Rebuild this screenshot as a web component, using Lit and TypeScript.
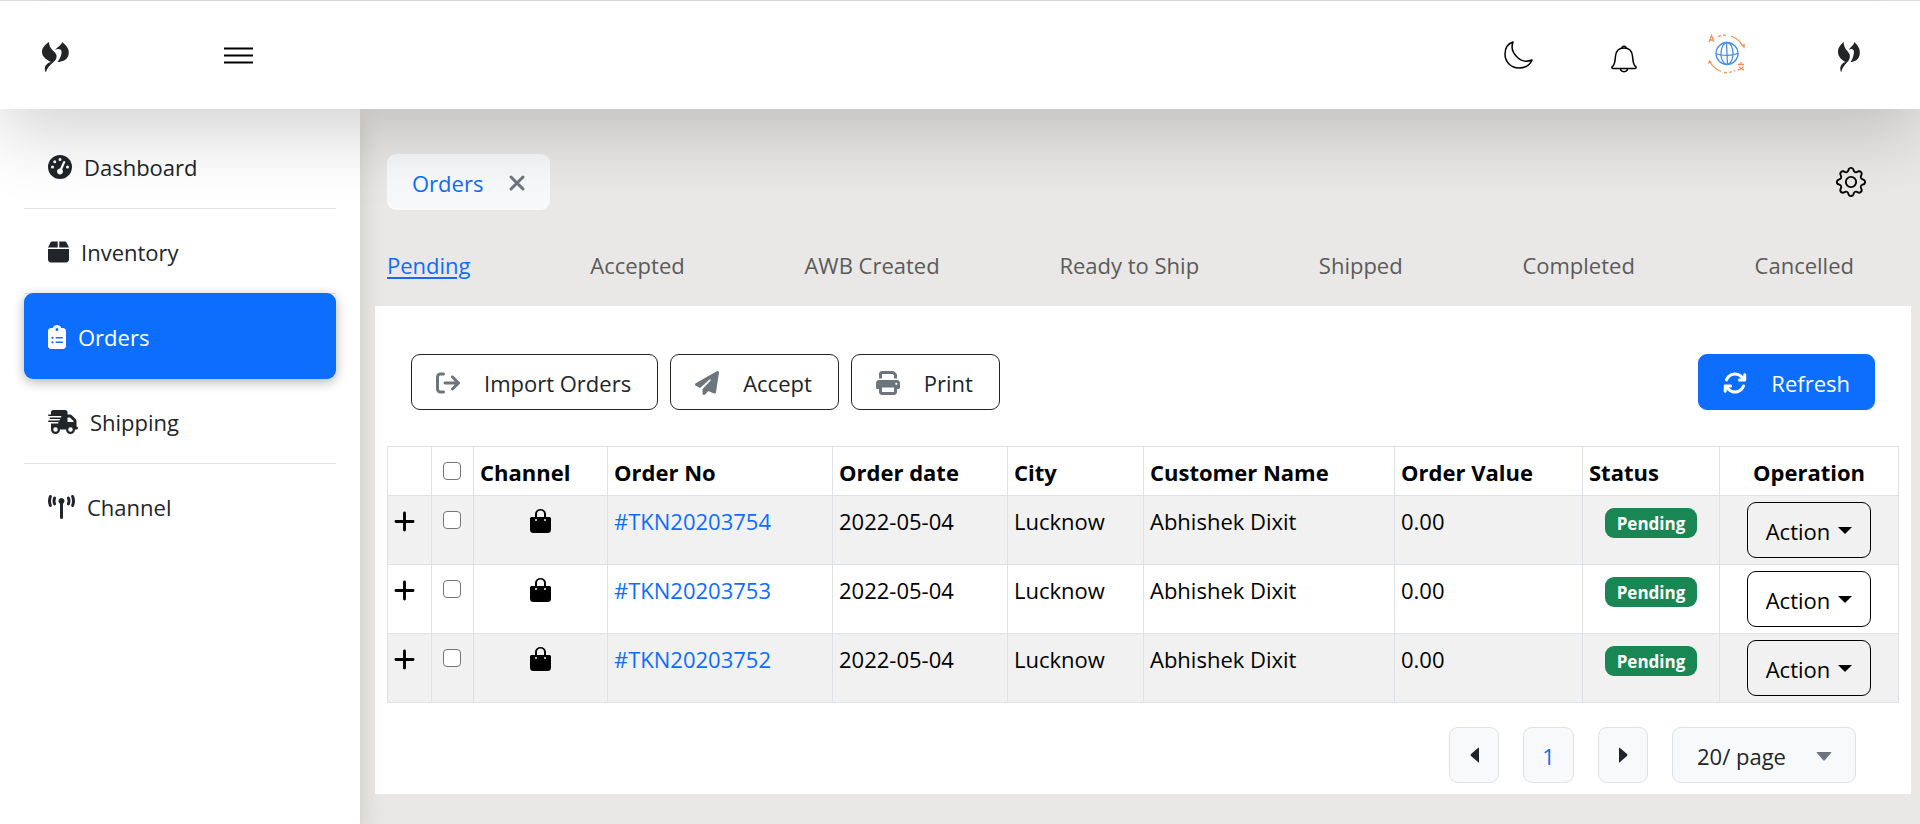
import { LitElement, html, css, svg } from "lit";
import { customElement } from "lit/decorators.js";

const icon = (cls: string, box: string, body: unknown) =>
  html`<svg class=${cls} viewBox=${box} aria-hidden="true">${body}</svg>`;

const gauge = svg`<path fill-rule="evenodd" d="M0 256a256 256 0 1 1 512 0A256 256 0 1 1 0 256zM288 96a32 32 0 1 0-64 0 32 32 0 1 0 64 0zM256 416c35.300 0 64-28.700 64-64 0-17.400-6.900-33.100-18.100-44.600L366 161.700c5.300-12.100-.200-26.300-12.300-31.600s-26.300 .200-31.600 12.300L257.900 288c-.600 0-1.300 0-1.900 0-35.300 0-64 28.700-64 64s28.700 64 64 64zM176 144a32 32 0 1 0-64 0 32 32 0 1 0 64 0zM96 288a32 32 0 1 0 0-64 32 32 0 1 0 0 64zm352-32a32 32 0 1 0-64 0 32 32 0 1 0 64 0z"/>`;
const box = svg`<path d="M50.700 58.500L0 160H208V32H93.700C75.500 32 58.900 42.300 50.700 58.500zM240 160H448L397.300 58.500C389.100 42.300 372.500 32 354.300 32H240V160zm208 32H0V416c0 35.300 28.700 64 64 64H384c35.300 0 64-28.700 64-64V192z"/>`;
const clipboard = svg`<path fill-rule="evenodd" d="M192 0c-41.800 0-77.400 26.700-90.500 64H64C28.700 64 0 92.700 0 128V448c0 35.300 28.700 64 64 64H320c35.300 0 64-28.700 64-64V128c0-35.300-28.700-64-64-64H282.500C269.400 26.700 233.800 0 192 0zm0 64a32 32 0 1 1 0 64 32 32 0 1 1 0-64zM72 272a24 24 0 1 1 48 0 24 24 0 1 1-48 0zm104-16H304c8.800 0 16 7.200 16 16s-7.200 16-16 16H176c-8.800 0-16-7.200-16-16s7.200-16 16-16zM72 368a24 24 0 1 1 48 0 24 24 0 1 1-48 0zm88 0c0-8.800 7.200-16 16-16H304c8.800 0 16 7.200 16 16s-7.200 16-16 16H176c-8.800 0-16-7.200-16-16z"/>`;
const truck = svg`<path fill-rule="evenodd" d="M112 0C85.500 0 64 21.500 64 48V96H16c-8.800 0-16 7.200-16 16s7.200 16 16 16H272c8.800 0 16 7.200 16 16s-7.200 16-16 16H48c-8.800 0-16 7.200-16 16s7.200 16 16 16H240c8.800 0 16 7.200 16 16s-7.200 16-16 16H16c-8.800 0-16 7.200-16 16s7.200 16 16 16H208c8.800 0 16 7.200 16 16s-7.200 16-16 16H64V416c0 53 43 96 96 96s96-43 96-96H384c0 53 43 96 96 96s96-43 96-96h32c17.700 0 32-14.300 32-32s-14.300-32-32-32V237.300c0-17-6.700-33.300-18.700-45.300L512 114.700c-12-12-28.300-18.700-45.300-18.700H416V48c0-26.500-21.500-48-48-48H112zM544 237.300V256H416V160h50.700L544 237.300zM160 368a48 48 0 1 1 0 96 48 48 0 1 1 0-96zm272 48a48 48 0 1 1 96 0 48 48 0 1 1-96 0z"/>`;
const tower = svg`<path d="M80.300 44C69.800 69.900 64 98.200 64 128s5.800 58.100 16.300 84c6.600 16.400-1.300 35-17.700 41.700s-35-1.300-41.700-17.700C7.400 202.600 0 166.100 0 128S7.400 53.400 20.900 20C27.600 3.600 46.200-4.300 62.600 2.300S86.900 27.600 80.300 44zM555.100 20C568.600 53.400 576 89.900 576 128s-7.400 74.600-20.900 108c-6.600 16.400-25.300 24.300-41.700 17.700S489.100 228.400 495.700 212c10.500-25.900 16.300-54.200 16.300-84s-5.800-58.100-16.300-84C489.100 27.600 497 9 513.400 2.300s35 1.300 41.700 17.700zM352 128c0 23.700-12.900 44.400-32 55.400V480c0 17.700-14.300 32-32 32s-32-14.300-32-32V183.400c-19.100-11.100-32-31.700-32-55.400 0-35.300 28.700-64 64-64s64 28.700 64 64zM170.600 76.800C163.800 92.400 160 109.700 160 128s3.800 35.600 10.600 51.200c7.100 16.200-.300 35.100-16.500 42.100s-35.100-.300-42.100-16.500c-10.300-23.600-16-49.600-16-76.800s5.700-53.200 16-76.800c7.100-16.200 25.900-23.600 42.100-16.500s23.600 25.900 16.500 42.100zM464 51.200c10.300 23.600 16 49.600 16 76.800s-5.700 53.200-16 76.800c-7.100 16.200-25.900 23.600-42.100 16.500s-23.600-25.900-16.500-42.100c6.800-15.600 10.600-32.900 10.600-51.200s-3.800-35.600-10.600-51.200c-7.100-16.200 .300-35.100 16.500-42.100s35.100 .300 42.100 16.500z"/>`;
const exportArrow = svg`<path d="M502.600 278.600c12.500-12.500 12.500-32.800 0-45.300l-128-128c-12.500-12.500-32.800-12.500-45.300 0s-12.500 32.800 0 45.300L402.700 224H192c-17.700 0-32 14.300-32 32s14.300 32 32 32H402.700l-73.400 73.400c-12.500 12.500-12.500 32.800 0 45.300s32.800 12.500 45.300 0l128-128zM160 96c17.700 0 32-14.300 32-32s-14.300-32-32-32H96C43 32 0 75 0 128V384c0 53 43 96 96 96h64c17.700 0 32-14.300 32-32s-14.300-32-32-32H96c-17.700 0-32-14.300-32-32V128c0-17.700 14.300-32 32-32h64z"/>`;
const plane = svg`<path d="M498.100 5.600c10.100 7 15.400 19.100 13.500 31.200l-64 416c-1.500 9.700-7.400 18.200-16 23s-18.900 5.400-28 1.600L284 427.700l-68.500 74.100c-8.900 9.700-22.900 12.900-35.200 8.100S160 493.200 160 480V396.400c0-4 1.500-7.800 4.200-10.700L331.800 202.800c5.800-6.300 5.600-16-.400-22s-15.700-6.400-22-.700L106 360.800 17.700 316.600C7.100 311.300 .300 300.700 0 288.900s5.900-22.800 16.100-28.700l448-256c10.700-6.100 23.900-5.500 34 1.400z"/>`;
const printer = svg`<path fill-rule="evenodd" d="M128 0C92.700 0 64 28.700 64 64v96h64V64H354.700L384 93.300V160h64V93.300c0-17-6.700-33.300-18.700-45.300L400 18.700C388 6.700 371.700 0 354.700 0H128zM384 352v96H128V352H384zm64 32h32c17.700 0 32-14.300 32-32V256c0-35.300-28.700-64-64-64H64c-35.300 0-64 28.700-64 64v96c0 17.700 14.300 32 32 32H64v64c0 35.300 28.700 64 64 64H384c35.300 0 64-28.700 64-64V384zM432 248a24 24 0 1 1 0 48 24 24 0 1 1 0-48z"/>`;
const rotate = svg`<path d="M105.100 202.600c7.700-21.800 20.200-42.300 37.800-59.800 62.500-62.500 163.800-62.500 226.300 0L386.300 160H352c-17.700 0-32 14.300-32 32s14.300 32 32 32H463.500c17.700 0 32-14.300 32-32V80c0-17.700-14.300-32-32-32s-32 14.300-32 32v35.200L414.400 97.600c-87.500-87.500-229.300-87.500-316.800 0C73.200 122 55.600 150.700 44.800 181.400c-5.900 16.700 2.900 34.900 19.500 40.800s34.900-2.900 40.800-19.500zM39 289.300c-5 1.500-9.800 4.200-13.700 8.200-4 4-6.700 8.800-8.100 14-.3 1.200-.6 2.500-.8 3.800-.3 1.700-.4 3.400-.4 5.100V432c0 17.700 14.300 32 32 32s32-14.300 32-32V396.900l17.600 17.500c87.500 87.400 229.300 87.400 316.700 0 24.400-24.400 42.100-53.100 52.900-83.700 5.900-16.700-2.900-34.900-19.500-40.800s-34.900 2.900-40.800 19.500c-7.700 21.800-20.200 42.300-37.800 59.800-62.500 62.500-163.800 62.500-226.300 0L125.600 352H160c17.700 0 32-14.300 32-32s-14.300-32-32-32H48.400c-1.600 0-3.200 .1-4.800 .3s-3.100 .5-4.600 1z"/>`;
const cross = svg`<path d="M2 2L14 14M14 2L2 14" fill="none" stroke="currentColor" stroke-width="3" stroke-linecap="round"/>`;
const plus = svg`<path d="M10 1V19M1 10H19" fill="none" stroke="currentColor" stroke-width="3" stroke-linecap="round"/>`;
const bag = svg`<path fill-rule="evenodd" d="M0 9.500Q0 8 1.500 8H5V5a5.500 5 0 0 1 11 0V8H19.500Q21 8 21 9.500V20.500a3.500 3.500 0 0 1-3.500 3.500H3.500a3.500 3.500 0 0 1-3.500-3.500zM7 8H14V5a3.500 3.500 0 0 0-7 0zM6 10a1 1 0 1 0 0 2 1 1 0 1 0 0-2zM15 10a1 1 0 1 0 0 2 1 1 0 1 0 0-2z"/>`;
const moon = svg`<path d="M9 1C3 3 1 8 1 13c0 8 6 14 14 14 6 0 11-3 13-8-5 2-10 2-15-3S7 6 9 1z" fill="none" stroke="currentColor" stroke-width="1.500" stroke-linejoin="round"/>`;
const bell = svg`<g fill="none" stroke="currentColor" stroke-width="1.500" stroke-linejoin="round"><path d="M2 23.500H24c1.500 0 1.500-2 0-2.500-2-2-2-5-2.500-10C21 6 18 3 13 3S5 6 4.500 11C4 16 4 19 2 21c-1.500 .5-1.500 2.500 0 2.500z"/><path d="M9.500 24c.5 3.500 6.500 3.500 7 0M11 3c0-2.500 4-2.500 4 0"/></g>`;
const gear = svg`<path fill="currentColor" d="M8 4.754a3.246 3.246 0 1 0 0 6.492 3.246 3.246 0 0 0 0-6.492zM5.754 8a2.246 2.246 0 1 1 4.492 0 2.246 2.246 0 0 1-4.492 0z"/><path fill="currentColor" d="M9.796 1.343c-.527-1.790-3.065-1.790-3.592 0l-.094.319a.873.873 0 0 1-1.255.520l-.292-.160c-1.640-.892-3.433.902-2.540 2.541l.159.292a.873.873 0 0 1-.520 1.255l-.319.094c-1.790.527-1.790 3.065 0 3.592l.319.094a.873.873 0 0 1 .520 1.255l-.160.292c-.892 1.640.901 3.434 2.541 2.540l.292-.159a.873.873 0 0 1 1.255.520l.094.319c.527 1.790 3.065 1.790 3.592 0l.094-.319a.873.873 0 0 1 1.255-.520l.292.160c1.640.893 3.434-.902 2.540-2.541l-.159-.292a.873.873 0 0 1 .520-1.255l.319-.094c1.790-.527 1.790-3.065 0-3.592l-.319-.094a.873.873 0 0 1-.520-1.255l.160-.292c.893-1.640-.902-3.433-2.541-2.540l-.292.159a.873.873 0 0 1-1.255-.520l-.094-.319zm-2.633.283c.246-.835 1.428-.835 1.674 0l.094.319a1.873 1.873 0 0 0 2.693 1.115l.291-.160c.764-.415 1.600.420 1.184 1.185l-.159.292a1.873 1.873 0 0 0 1.116 2.692l.318.094c.835.246.835 1.428 0 1.674l-.319.094a1.873 1.873 0 0 0-1.115 2.693l.160.291c.415.764-.420 1.600-1.185 1.184l-.291-.159a1.873 1.873 0 0 0-2.693 1.116l-.094.318c-.246.835-1.428.835-1.674 0l-.094-.319a1.873 1.873 0 0 0-2.692-1.115l-.292.160c-.764.415-1.600-.420-1.184-1.185l.159-.291A1.873 1.873 0 0 0 1.945 8.930l-.319-.094c-.835-.246-.835-1.428 0-1.674l.319-.094A1.873 1.873 0 0 0 3.060 4.377l-.160-.292c-.415-.764.420-1.600 1.185-1.184l.292.159a1.873 1.873 0 0 0 2.692-1.115l.094-.319z"/>`;
const globe = svg`
  <g fill="none" stroke="#4a90e8" stroke-width="1.300"><circle cx="20" cy="19.500" r="11"/><ellipse cx="20" cy="19.500" rx="6" ry="11"/><path d="M19.500 8.500L20.500 30.500M9 19.500C14 22 26 22 31 19"/></g>
  <g fill="none" stroke="#f0935a" stroke-width="1.300"><path d="M2 8L4.500 1.500L7 8M3 6H6.500"/><path d="M11 2.500C15 1 18 1 21 1.500" stroke-dasharray="3 2"/><path d="M24 2C29 3.500 33 7 35.500 11.500"/><path d="M3 28C6 33 10 36 14 37.500"/><path d="M17 38.500C21 39 24 38 28 36.500" stroke-dasharray="3 2"/><path d="M31 30.500H37M34 28V30.500M36.500 32.500C35.500 34.500 33.500 35.500 31 36M32 32.500C33 34.500 35 35.500 37 36"/></g>
  <path fill="#f0935a" d="M34 11L38 10L37.500 14.500zM1 30L2 26L5 28z"/>`;
const logo = svg`<path fill="#222426" d="M7 0C4 2 0 5 0 10C0 15 5 18 9 20C5 21 2 24 3 28Q3 30 4 30C5 26 8 23 11 20.500C14 18 15 16 14.500 13C13 9 7 7 7 0zM20 0C20 3 15 5 13 8C16 6 19 7 19.500 9C20 12 18 17 15.500 20C20 20 25 18 26.500 13C28 7 24 3 20 0z"/>`;
const bars = svg`<path d="M0 1.500H29M0 8.500H29M0 15.500H29" fill="none" stroke="#000" stroke-width="2"/>`;
const triLeft = svg`<path d="M9 1V15Q9 16 8 15L1 9Q0 8 1 7L8 1Q9 0 9 1z"/>`;
const triRight = svg`<path d="M0 1V15Q0 16 1 15L8 9Q9 8 8 7L1 1Q0 0 0 1z"/>`;
const triDown = svg`<path d="M1 0H15Q16 0 15 1L9 8Q8 9 7 8L1 1Q0 0 1 0z"/>`;
const caret = svg`<path d="M0 0H14L7 7z"/>`;

@customElement("app-root")
export class AppRoot extends LitElement {
  static styles = css`
    :host { display: flex; flex-direction: column; min-height: 100vh; box-sizing: border-box; border-top: 1px solid #dee2e6; background: #e9e8e6; color: #212529; font: 22px/36px "Open Sans", "Noto Sans", sans-serif; }
    * { box-sizing: border-box; }
    svg { display: block; flex: none; fill: currentColor; overflow: visible; }
    a { color: inherit; text-decoration: none; }
    button, select { font: inherit; color: inherit; cursor: pointer; margin: 0; }
    .bare { display: block; padding: 0; border: 0; background: none; color: #000; }
    .i24 { width: 24px; height: 24px; }
    .w21 { width: 21px; height: 24px; }
    .w18 { width: 18px; height: 24px; }
    .w30 { width: 30px; height: 24px; }
    .w27 { width: 27px; height: 24px; }

    .top { position: relative; z-index: 2; display: flex; align-items: center; height: 108px; padding: 0 60px 0 42px; background: #fff; box-shadow: 0 24px 72px rgba(0, 0, 0, .175); }
    .logo { width: 27px; height: 30px; margin-top: 3px; }
    .logo.small { width: 22px; }
    .menu { margin-left: 155px; }
    .bars { width: 29px; height: 17px; }
    .tools { display: flex; align-items: center; margin-left: auto; }
    .moon { width: 28px; height: 28px; margin-right: 79px; }
    .bell { width: 26px; height: 28px; margin: 8px 70px 0 0; }
    .globe { width: 38px; height: 40px; margin: 0 93px 2px 0; }

    .body { display: flex; flex: 1; }
    .side { position: relative; z-index: 1; width: 360px; flex: none; padding: 15px 24px; background: #fff; box-shadow: 0 12px 24px rgba(0, 0, 0, .15); }
    .item { display: flex; align-items: center; gap: 12px; height: 85px; padding: 2px 24px 0; border-bottom: 1px solid #dee2e6; }
    .item:last-child { border-bottom: 0; padding-top: 0; }
    .item.on { height: 86px; margin-top: -1px; background: #0d6efd; color: #fff; border: 0; border-radius: 9px; box-shadow: 0 3px 12px rgba(0, 0, 0, .3); }

    .main { flex: 1; min-width: 0; padding: 45px 9px 0 15px; }
    .head { display: flex; align-items: center; justify-content: space-between; padding: 0 45px 0 12px; }
    .pill { display: flex; align-items: center; gap: 26px; height: 56px; padding: 1px 25px 0; border-radius: 9px; background: #f8f9fa; color: #0d6efd; }
    .cross { width: 16px; height: 16px; color: #6c757d; }
    .gear { width: 30px; height: 30px; }
    .tabs { display: flex; justify-content: space-between; padding: 37px 57px 23px 12px; color: #5b5b5b; }
    .tabs .on { color: #0d6efd; text-decoration: underline; text-decoration-thickness: 2px; text-underline-offset: 3px; }
    .panel { background: #fff; padding: 48px 12px 11px; }
    .bar { display: flex; gap: 12px; padding: 0 24px 36px; }
    .btn { display: flex; align-items: center; gap: 24px; height: 56px; padding: 1px 26px 0 24px; border: 1px solid #212529; border-radius: 9px; background: #fff; }
    .btn svg { color: #6c757d; }
    .btn.primary { margin-left: auto; padding-right: 24px; background: #0d6efd; border-color: #0d6efd; color: #fff; }
    .btn.primary svg { color: #fff; }

    table { width: 100%; table-layout: fixed; border-collapse: collapse; color: #000; }
    th, td { border: 1px solid #dee2e6; height: 49px; padding: 7px 6px 5px; text-align: left; vertical-align: top; white-space: nowrap; }
    tbody tr:nth-child(odd) { background: #f1f1f1; }
    .mid { text-align: center; }
    .c1 { width: 44px; } .c2 { width: 42px; } .c3 { width: 134px; } .c4 { width: 225px; } .c5 { width: 175px; }
    .c6 { width: 136px; } .c7 { width: 251px; } .c8 { width: 188px; } .c9 { width: 137px; } .c10 { width: 179px; }
    input { appearance: none; display: block; width: 18px; height: 18px; margin: 8px 5px 0; border: 1px solid #767676; border-radius: 4px; background: #fff; }
    .plus { width: 19px; height: 19px; margin: 9px 0 0 1px; }
    .bag { width: 21px; height: 24px; margin: 6px auto 0; }
    .no { color: #0d6efd; }
    .badge { display: block; width: fit-content; margin: 5px auto 0; padding: 1px 12px 0; border-radius: 9px; background: #198754; color: #fff; font-size: 17px; font-weight: 700; line-height: 29px; }
    .op { padding: 6px; }
    .action { display: flex; align-items: center; gap: 8px; height: 56px; margin: 0 auto; padding: 1px 18px 0; border: 1px solid #000; border-radius: 9px; background: none; }
    .caret { width: 14px; height: 7px; }

    .pager { display: flex; justify-content: flex-end; gap: 24px; padding: 24px 43px 0 0; }
    .page { display: flex; align-items: center; justify-content: center; width: 50px; height: 56px; padding: 0; border: 1px solid #dee2e6; border-radius: 9px; background: #f8f9fa; }
    .page.on { width: 51px; padding-top: 2px; color: #0d6efd; }
    .tri { width: 9px; height: 16px; }
    .size { display: grid; align-items: center; }
    .size select, .size svg { grid-area: 1 / 1; }
    .size select { appearance: none; width: 184px; height: 56px; padding: 2px 24px 0; border: 1px solid #dee2e6; border-radius: 9px; background: #f8f9fa; }
    .size svg { justify-self: end; width: 16px; height: 9px; margin: 3px 24px 0 0; color: #6c757d; pointer-events: none; }
  `;

  render() {
    const nav: [string, unknown][] = [
      ["Dashboard", icon("i24", "0 0 512 512", gauge)],
      ["Inventory", icon("w21", "0 0 448 512", box)],
      ["Orders", icon("w18", "0 0 384 512", clipboard)],
      ["Shipping", icon("w30", "0 0 640 512", truck)],
      ["Channel", icon("w27", "0 0 576 512", tower)],
    ];
    const tabs = ["Pending", "Accepted", "AWB Created", "Ready to Ship", "Shipped", "Completed", "Cancelled"];
    const orders = ["#TKN20203754", "#TKN20203753", "#TKN20203752"];
    return html`
      <header class="top">
        <a href="#" aria-label="Home">${icon("logo", "0 0 27 30", logo)}</a>
        <button class="bare menu" aria-label="Toggle menu">${icon("bars", "0 0 29 17", bars)}</button>
        <div class="tools">
          <button class="bare" aria-label="Dark mode">${icon("moon", "0 0 28 28", moon)}</button>
          <button class="bare" aria-label="Notifications">${icon("bell", "0 0 26 28", bell)}</button>
          <button class="bare" aria-label="Language">${icon("globe", "0 0 38 40", globe)}</button>
          <button class="bare" aria-label="Account"><svg class="logo small" viewBox="0 0 27 30" preserveAspectRatio="none" aria-hidden="true">${logo}</svg></button>
        </div>
      </header>
      <div class="body">
        <nav class="side">
          ${nav.map(([name, pic]) => html`<a href="#" class="item ${name === "Orders" ? "on" : ""}">${pic}<span>${name}</span></a>`)}
        </nav>
        <main class="main">
          <div class="head">
            <div class="pill"><a href="#">Orders</a><button class="bare" aria-label="Close Orders">${icon("cross", "0 0 16 16", cross)}</button></div>
            <button class="bare" aria-label="Settings">${icon("gear", "0 0 16 16", gear)}</button>
          </div>
          <nav class="tabs">${tabs.map((t, i) => html`<a href="#" class=${i ? "" : "on"}>${t}</a>`)}</nav>
          <section class="panel">
            <div class="bar">
              <button class="btn">${icon("i24", "0 0 512 512", exportArrow)}Import Orders</button>
              <button class="btn">${icon("i24", "0 0 512 512", plane)}Accept</button>
              <button class="btn">${icon("i24", "0 0 512 512", printer)}Print</button>
              <button class="btn primary">${icon("i24", "0 0 512 512", rotate)}Refresh</button>
            </div>
            <table>
              <colgroup>${[1, 2, 3, 4, 5, 6, 7, 8, 9, 10].map((n) => html`<col class="c${n}">`)}</colgroup>
              <thead>
                <tr>
                  <th></th><th><input type="checkbox" aria-label="Select all orders"></th><th>Channel</th><th>Order No</th><th>Order date</th>
                  <th>City</th><th>Customer Name</th><th>Order Value</th><th>Status</th><th class="mid">Operation</th>
                </tr>
              </thead>
              <tbody>
                ${orders.map((no) => html`<tr>
                  <td><button class="bare" aria-label="Expand ${no}">${icon("plus", "0 0 20 20", plus)}</button></td>
                  <td><input type="checkbox" aria-label="Select ${no}"></td>
                  <td>${icon("bag", "0 0 21 24", bag)}</td>
                  <td><a class="no" href="#">${no}</a></td>
                  <td>2022-05-04</td><td>Lucknow</td><td>Abhishek Dixit</td><td>0.00</td>
                  <td><span class="badge">Pending</span></td>
                  <td class="op"><button class="action">Action${icon("caret", "0 0 14 7", caret)}</button></td>
                </tr>`)}
              </tbody>
            </table>
            <div class="pager">
              <button class="page" aria-label="Previous page">${icon("tri", "0 0 9 16", triLeft)}</button>
              <button class="page on">1</button>
              <button class="page" aria-label="Next page">${icon("tri", "0 0 9 16", triRight)}</button>
              <label class="size"><select aria-label="Rows per page"><option>20/ page</option></select>${icon("", "0 0 16 9", triDown)}</label>
            </div>
          </section>
        </main>
      </div>
    `;
  }
}
